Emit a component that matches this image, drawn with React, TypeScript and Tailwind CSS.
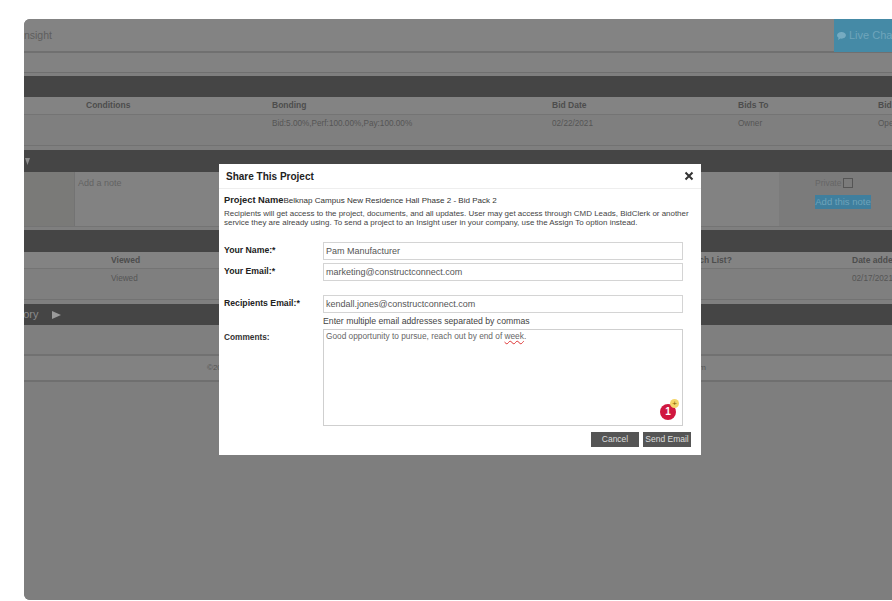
import React from 'react';

const sans = "font-['Liberation_Sans',Arial,sans-serif]";

const Field = ({ label, value, className }: { label: string; value: string; className: string }) => (
  <div className={`flex ${className}`}>
    <label className="w-[99px] pt-[2px] text-[8.7px] font-bold leading-[12px] text-[#222]">{label}</label>
    <div className="flex h-[18px] w-[360px] items-center border border-[#d4d4d4] pl-[2px] pt-[1px] text-[9px] text-[#555]">
      {value}
    </div>
  </div>
);

export default function App() {
  return (
    <div className={`relative h-[601px] w-[892px] overflow-hidden bg-white pl-[24px] pt-[19px] ${sans}`}>
      <div className="flex h-[581px] w-[868px] flex-col overflow-hidden rounded-l-[6px] bg-[#7f7f7f] text-[#4a4a4a]">
        <div className="flex h-[34px] shrink-0 items-center justify-between border-b-2 border-[#707070] bg-[#838383]">
          <span className="-ml-[3px] pt-px text-[10.5px] text-[#5e5e5e]">Insight</span>
          <div className="flex h-[33px] w-[58px] items-center gap-[3px] overflow-hidden whitespace-nowrap bg-[#458aa6] pl-[3px] pt-px text-[11px] text-[#6fa5bb]">
            <svg width="9" height="8" viewBox="0 0 10 9" className="shrink-0" fill="#76abc1">
              <path d="M5 0C2.2 0 0 1.6 0 3.7c0 1.1.7 2.1 1.7 2.8L1 9l2.8-1.6c.4.1.8.1 1.2.1 2.8 0 5-1.7 5-3.8S7.8 0 5 0z" />
            </svg>
            Live Chat
          </div>
        </div>
        <div className="h-[20px] shrink-0 border-b border-[#6f6f6f] bg-[#828282]" />
        <div className="h-[3px] shrink-0" />
        <div className="h-[21px] shrink-0 bg-[#454545]" />

        <div className="grid h-[18px] shrink-0 grid-cols-[62px_186px_280px_186px_140px_40px] items-center border-b border-[#747474] bg-[#838383] text-[8.5px] font-bold text-[#4d4d4d]">
          <span />
          <span>Conditions</span>
          <span>Bonding</span>
          <span>Bid Date</span>
          <span>Bids To</span>
          <span>Bid</span>
        </div>
        <div className="grid h-[31px] shrink-0 grid-cols-[62px_186px_280px_186px_140px_40px] border-b border-[#727272] pt-[4px] text-[8.2px] leading-[10px] text-[#555]">
          <span />
          <span />
          <span>Bid:5.00%,Perf:100.00%,Pay:100.00%</span>
          <span>02/22/2021</span>
          <span>Owner</span>
          <span>Open</span>
        </div>
        <div className="h-[4px] shrink-0" />

        <div className="flex h-[22px] shrink-0 items-center bg-[#454545]">
          <svg width="5" height="7" viewBox="0 0 5 7" className="ml-px">
            <polygon points="0,0 5,0 2.5,7" fill="#8b8b8b" />
          </svg>
        </div>
        <div className="flex h-[55px] shrink-0 border-b border-[#747474]">
          <div className="w-[50px] bg-[#7a7a78]" />
          <div className="w-[705px] border-l border-[#737373] bg-[#828282] pl-[3px] pt-[5px] text-[9px] text-[#626262]">Add a note</div>
          <div className="flex-1 bg-[#7b7b7b] pl-[36px] pt-[5px] text-[8.5px] text-[#666]">
            <div className="flex h-[12px] items-center gap-[2px]">
              Private
              <span className="h-[10px] w-[10px] border border-[#555]" />
            </div>
            <div className="mt-[6px] flex h-[14px] w-[56px] items-center justify-center whitespace-nowrap bg-[#3f7f9e] text-[9.5px] text-[#6ea3ba]">
              Add this note
            </div>
          </div>
        </div>
        <div className="h-[3px] shrink-0" />
        <div className="h-[22px] shrink-0 bg-[#454545]" />

        <div className="grid h-[17px] shrink-0 grid-cols-[87px_573px_168px_60px] items-center whitespace-nowrap border-b border-[#747474] bg-[#838383] text-[8.5px] font-bold text-[#4d4d4d]">
          <span />
          <span>Viewed</span>
          <span>Watch List?</span>
          <span>Date added</span>
        </div>
        <div className="grid h-[31px] shrink-0 grid-cols-[87px_741px_60px] whitespace-nowrap border-b border-[#727272] pt-[5px] text-[8.2px] leading-[10px] text-[#555]">
          <span />
          <span>Viewed</span>
          <span>02/17/2021</span>
        </div>
        <div className="h-[4px] shrink-0" />

        <div className="flex h-[21px] shrink-0 items-center bg-[#454545] text-[11px] text-[#8b8b8b]">
          <span className="-ml-[57px] whitespace-nowrap">Project History</span>
          <svg width="9" height="8" viewBox="0 0 9 8" className="ml-[13px]">
            <polygon points="0,0 9,4 0,8" fill="#9a9a9a" />
          </svg>
        </div>
        <div className="h-[31px] shrink-0 border-b-2 border-[#717171]" />
        <div className="flex h-[26px] shrink-0 items-center border-b-2 border-[#6f6f6f] bg-[#828282] pl-[183px] text-[8px] text-[#555]">
          <div className="flex w-[499px] justify-between">
            <span>©2021</span>
            <span>constructconnect.com</span>
          </div>
        </div>
        <div className="flex-1 bg-[#7e7e7e]" />
      </div>

      <div className="absolute left-[219px] top-[164px] h-[291px] w-[482px] bg-white">
        <div className="flex h-[25px] items-center justify-between border-b border-[#eeeeee] pl-[7px] pr-[6px]">
          <h2 className="pt-px text-[10px] font-bold text-[#222]">Share This Project</h2>
          <svg width="10" height="10" viewBox="0 0 10 10" className="mr-px">
            <path d="M1.5 1.5l7 7M8.5 1.5l-7 7" stroke="#333" strokeWidth="2" />
          </svg>
        </div>
        <div className="pl-[5px] pt-[5px]">
          <p className="text-[8.05px] leading-[12px] text-[#333]">
            <span className="text-[9.3px] font-bold text-[#222]">Project Name</span>
            Belknap Campus New Residence Hall Phase 2 - Bid Pack 2
          </p>
          <p className="mt-[2px] w-[472px] text-[7.95px] leading-[9px] text-[#444]">
            Recipients will get access to the project, documents, and all updates. User may get access through CMD Leads, BidClerk or another service they are already using. To send a project to an Insight user in your company, use the Assign To option instead.
          </p>
          <Field label="Your Name:*" value="Pam Manufacturer" className="mt-[15px]" />
          <Field label="Your Email:*" value="marketing@constructconnect.com" className="mt-[3px]" />
          <Field label="Recipients Email:*" value="kendall.jones@constructconnect.com" className="mt-[14px]" />
          <p className="ml-[99px] mt-[2px] text-[8.7px] leading-[12px] text-[#444]">Enter multiple email addresses separated by commas</p>
          <div className="mt-[2px] flex">
            <label className="w-[99px] pt-[2px] text-[8.3px] font-bold leading-[12px] text-[#333]">Comments:</label>
            <div className="relative h-[97px] w-[360px] border border-[#cfcfcf] pl-[2px] pt-[1px] text-[8.3px] leading-[10px] text-[#666]">
              Good opportunity to pursue, reach out by end of{' '}
              <span className="underline decoration-[#d33] decoration-wavy">week</span>.
              <span className="absolute left-[336px] top-[74px] flex h-[16px] w-[16px] items-center justify-center rounded-full bg-[#d0173f] text-[10px] font-bold text-white">
                1
              </span>
              <span className="absolute left-[346px] top-[69px] flex h-[9px] w-[9px] items-center justify-center rounded-full bg-[#f4d56a] text-[8px] leading-none text-[#7a5a00]">
                +
              </span>
            </div>
          </div>
          <div className="mt-[6px] flex justify-end gap-[4px] pr-[10px]">
            <button className="h-[15px] w-[48px] bg-[#555] text-[8.5px] text-[#ddd]">Cancel</button>
            <button className="h-[15px] w-[48px] whitespace-nowrap bg-[#555] text-[8.5px] text-[#ddd]">Send Email</button>
          </div>
        </div>
      </div>
    </div>
  );
}
